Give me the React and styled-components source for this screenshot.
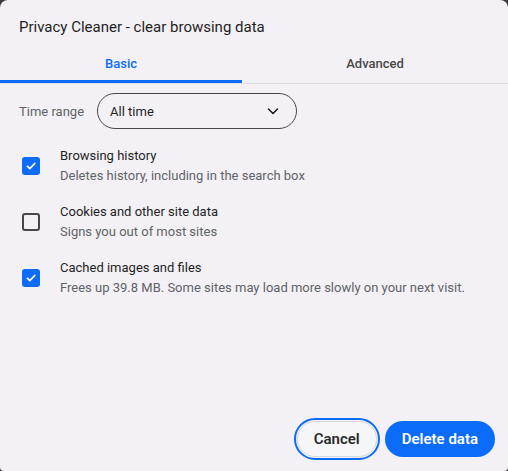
import React, { useState } from "react";
import styled, { createGlobalStyle } from "styled-components";

const GlobalStyle = createGlobalStyle`
  html, body { margin: 0; padding: 0; background: #3a3a3d; }
  body { font-family: Roboto, "Noto Sans", Arial, sans-serif; }
  * { box-sizing: border-box; }
`;

const BLUE = "#0b6cf9";

const Dialog = styled.div`
  width: 508px;
  height: 471px;
  background: #f3f1f5;
  border-radius: 8px 8px 4px 4px;
  display: flex;
  flex-direction: column;
  overflow: hidden;
`;

const Title = styled.h1`
  margin: 0;
  padding: 17px 19px 0;
  height: 46px;
  font-size: 15px;
  line-height: 20px;
  font-weight: 400;
  color: #1f1f1f;
`;

const TabList = styled.div`
  display: flex;
  border-bottom: 1px solid #e0dee4;
`;

const Tab = styled.button`
  all: unset;
  height: 37px;
  width: ${(p) => p.$w}px;
  display: flex;
  align-items: center;
  justify-content: center;
  box-sizing: border-box;
  border-bottom: 3px solid ${(p) => (p.$active ? BLUE : "transparent")};
  font-family: Roboto, sans-serif;
  font-size: 13px;
  font-weight: 500;
  color: ${(p) => (p.$active ? BLUE : "#474747")};
  cursor: pointer;
`;

const RangeRow = styled.div`
  display: flex;
  align-items: center;
  gap: 13px;
  padding: 9px 19px 0;
`;

const Label = styled.span`
  font-size: 13px;
  color: #5f6368;
`;

const Select = styled.div`
  width: 200px;
  height: 36px;
  border: 1px solid #474747;
  border-radius: 18px;
  display: flex;
  align-items: center;
  justify-content: space-between;
  padding: 0 16px 0 12px;
  font-size: 13px;
  color: #1f1f1f;
`;

const Items = styled.div`
  display: flex;
  flex-direction: column;
  gap: 16px;
  padding: 17px 0 0 22px;
`;

const Item = styled.label`
  display: flex;
  align-items: center;
  gap: 20px;
  height: 40px;
  cursor: pointer;
`;

const Box = styled.span`
  width: 18px;
  height: 18px;
  border-radius: 3px;
  flex: none;
  display: flex;
  align-items: center;
  justify-content: center;
  background: ${(p) => (p.$checked ? BLUE : "transparent")};
  border: ${(p) => (p.$checked ? "none" : "2px solid #474747")};
`;

const Texts = styled.span`
  display: flex;
  flex-direction: column;
`;

const ItemTitle = styled.span`
  font-size: 13px;
  line-height: 20px;
  color: #1f1f1f;
`;

const ItemDesc = styled.span`
  font-size: 13px;
  line-height: 20px;
  color: #5f6368;
`;

const Footer = styled.div`
  margin-top: auto;
  display: flex;
  justify-content: flex-end;
  gap: 8px;
  padding: 0 13px 14px 0;
`;

const Button = styled.button`
  height: 36px;
  padding: 0 ${(p) => (p.$primary ? "17px" : "16px")};
  border-radius: 18px;
  font-family: Roboto, sans-serif;
  font-size: 15px;
  font-weight: 600;
  cursor: pointer;
  background: ${(p) => (p.$primary ? BLUE : "#f6f5f8")};
  color: ${(p) => (p.$primary ? "#ffffff" : "#2a2a2a")};
  border: ${(p) => (p.$primary ? "none" : "1px solid #d8d7dc")};
  outline: ${(p) => (p.$focused ? `2px solid ${BLUE}` : "none")};
  outline-offset: 1px;
`;

const Check = () => (
  <svg width="12" height="12" viewBox="0 0 12 12">
    <path d="M2.3 6.2 L4.8 8.6 L9.8 3.4" fill="none" stroke="#fff" strokeWidth="1.6" strokeLinecap="round" strokeLinejoin="round" />
  </svg>
);

const Chevron = () => (
  <svg width="14" height="14" viewBox="0 0 14 14">
    <path d="M2.5 5 L7 9.5 L11.5 5" fill="none" stroke="#1f1f1f" strokeWidth="1.6" strokeLinecap="round" strokeLinejoin="round" />
  </svg>
);

const items = [
  { title: "Browsing history", desc: "Deletes history, including in the search box", checked: true },
  { title: "Cookies and other site data", desc: "Signs you out of most sites", checked: false },
  { title: "Cached images and files", desc: "Frees up 39.8 MB. Some sites may load more slowly on your next visit.", checked: true },
];

export default function App() {
  const [state, setState] = useState(items.map((i) => i.checked));
  return (
    <>
      <GlobalStyle />
      <Dialog>
        <Title>Privacy Cleaner - clear browsing data</Title>
        <TabList>
          <Tab $active $w={242}>Basic</Tab>
          <Tab $w={266}>Advanced</Tab>
        </TabList>
        <RangeRow>
          <Label>Time range</Label>
          <Select>
            <span>All time</span>
            <Chevron />
          </Select>
        </RangeRow>
        <Items>
          {items.map((it, i) => (
            <Item key={it.title} onClick={() => setState((s) => s.map((v, j) => (j === i ? !v : v)))}>
              <Box $checked={state[i]}>{state[i] && <Check />}</Box>
              <Texts>
                <ItemTitle>{it.title}</ItemTitle>
                <ItemDesc>{it.desc}</ItemDesc>
              </Texts>
            </Item>
          ))}
        </Items>
        <Footer>
          <Button $focused>Cancel</Button>
          <Button $primary>Delete data</Button>
        </Footer>
      </Dialog>
    </>
  );
}
